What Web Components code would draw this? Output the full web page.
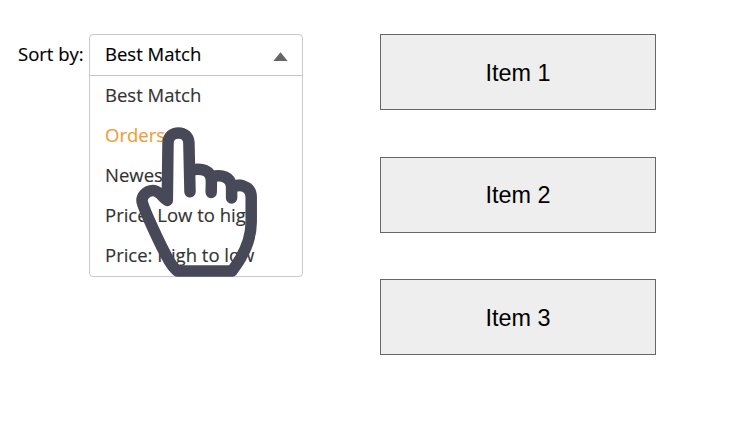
<!DOCTYPE html>
<html lang="en">
<head>
<meta charset="utf-8">
<title>Sort by</title>
<style>
body { margin: 0; background: #fff; width: 729px; height: 444px; overflow: hidden; }
</style>
</head>
<body>
<sort-page></sort-page>
<script>
const define = (name, html) => {
  const t = document.createElement('template');
  t.innerHTML = html;
  customElements.define(name, class extends HTMLElement {
    constructor() {
      super();
      this.attachShadow({ mode: 'open' }).append(t.content.cloneNode(true));
    }
  });
};

define('sort-option', `
<style>
:host { display: block; height: 40px; line-height: 38px; padding-left: 15px; color: #333; white-space: nowrap; }
:host([active]) { color: #f19d38; }
</style><slot></slot>`);

define('sort-select', `
<style>
:host { display: block; box-sizing: border-box; width: 214px; height: 243px; border: 1.5px solid #c9c9c9; border-radius: 4px; background: #fff; }
.head { display: flex; align-items: center; justify-content: space-between; box-sizing: border-box; height: 41px; padding: 0 14px 0 15px; border-bottom: 1px solid #c6c6c6; color: #000; }
.head span { line-height: 38px; height: 40px; }
svg { display: block; margin-top: 3px; }
</style>
<div class="head"><span><slot name="value"></slot></span><svg width="15" height="9" viewBox="0 0 15 9"><path d="M.4 9 7.5 .2 14.6 9Z" fill="#666"/></svg></div>
<slot></slot>`);

define('item-card', `
<style>
:host { display: flex; align-items: center; justify-content: center; box-sizing: border-box; width: 276px; height: 76.3px; border: 1px solid #666; background: #eee; color: #000; font: 23.4px/28px "Liberation Sans", Arial, sans-serif; }
span { padding-top: 1px; }
</style><span><slot></slot></span>`);

define('hand-pointer', `
<style>:host { display: block; } svg { display: block; }</style>
<svg width="123" height="152" viewBox="135 126 123 152" fill="none" stroke="#484958" stroke-width="11.5" stroke-linecap="round" stroke-linejoin="round">
<path d="M190 191.8 L188.9 143 C188.9 129.5 168 129.5 168 143 L167.3 200.4 C162.5 198 160 190.5 153 190.5 C146 190.5 140.5 197 142.5 203 C145 212 160 244 166.5 256 Q172 267 177.5 271 L232 271 C242 258 251.2 242 251.2 222 L251.2 197 C251.2 188 244 184.6 236 185.8"/>
<path d="M190 170.2 C202 167.5 211.4 170 211.4 181 L211.2 192.4 M211.4 177 C222 174 231 177 231.6 187 L231.6 198 M231.6 187.4 Q235 185 241 185.2"/>
</svg>`);

define('sort-page', `
<style>
:host { display: flex; position: relative; box-sizing: border-box; width: 729px; height: 444px; padding: 34px 0 0 18px; align-items: flex-start; font: 18.5px "Open Sans", "Noto Sans", sans-serif; -webkit-text-stroke: .15px; }
.label { width: 71px; line-height: 40px; white-space: nowrap; color: #000; }
.items { display: grid; row-gap: 46.3px; margin-left: 77px; -webkit-text-stroke: 0; }
hand-pointer { position: absolute; left: 135px; top: 126px; }
</style>
<div class="label">Sort by:</div>
<sort-select>
<span slot="value">Best Match</span>
<sort-option>Best Match</sort-option>
<sort-option active>Orders</sort-option>
<sort-option>Newest</sort-option>
<sort-option>Price: Low to high</sort-option>
<sort-option>Price: High to low</sort-option>
</sort-select>
<div class="items"><item-card>Item 1</item-card><item-card>Item 2</item-card><item-card>Item 3</item-card></div>
<hand-pointer></hand-pointer>`);
</script>
</body>
</html>
